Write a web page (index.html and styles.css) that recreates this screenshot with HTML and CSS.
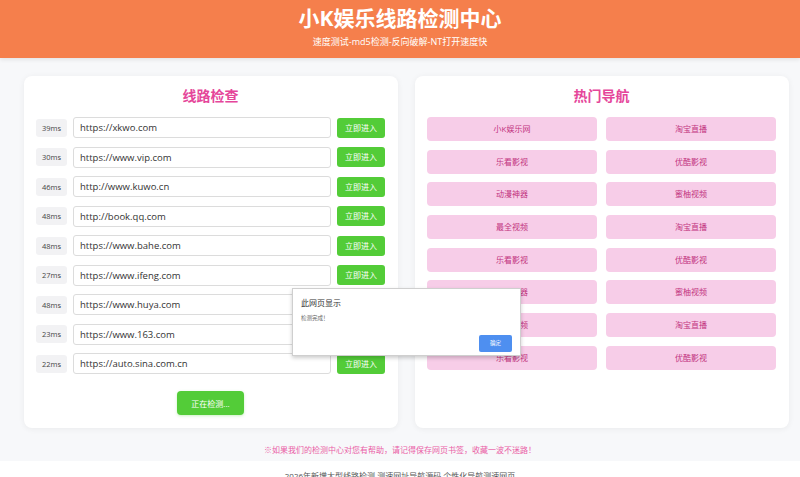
FILE: index.html
```html
<!DOCTYPE html>
<html lang="zh-CN">

<head>
	<meta charset="UTF-8">
	<title>小K娱乐线路检测中心</title>
	<link rel="stylesheet" href="styles.css">
</head>

<body>
	<header class="top">
		<h1>小K娱乐线路检测中心</h1>
		<p>速度测试-md5检测-反向破解-NT打开速度快</p>
	</header>

	<main class="main">
		<section class="card">
			<h2>线路检查</h2>
			<div class="lines">
				<div class="line"><span class="ms">39ms</span><input class="url" value="https://xkwo.com"><a class="go">立即进入</a></div>
				<div class="line"><span class="ms">30ms</span><input class="url" value="https://www.vip.com"><a class="go">立即进入</a></div>
				<div class="line"><span class="ms">46ms</span><input class="url" value="http://www.kuwo.cn"><a class="go">立即进入</a></div>
				<div class="line"><span class="ms">48ms</span><input class="url" value="http://book.qq.com"><a class="go">立即进入</a></div>
				<div class="line"><span class="ms">48ms</span><input class="url" value="https://www.bahe.com"><a class="go">立即进入</a></div>
				<div class="line"><span class="ms">27ms</span><input class="url" value="https://www.ifeng.com"><a class="go">立即进入</a></div>
				<div class="line"><span class="ms">48ms</span><input class="url" value="https://www.huya.com"><a class="go">立即进入</a></div>
				<div class="line"><span class="ms">23ms</span><input class="url" value="https://www.163.com"><a class="go">立即进入</a></div>
				<div class="line"><span class="ms">22ms</span><input class="url" value="https://auto.sina.com.cn"><a class="go">立即进入</a></div>
			</div>
			<div class="check-wrap"><button class="check">正在检测...</button></div>
		</section>

		<section class="card">
			<h2>热门导航</h2>
			<div class="nav">
				<a>小K娱乐网</a>
				<a>淘宝直播</a>
				<a>乐看影视</a>
				<a>优酷影视</a>
				<a>动漫神器</a>
				<a>蜜柚视频</a>
				<a>最全视频</a>
				<a>淘宝直播</a>
				<a>乐看影视</a>
				<a>优酷影视</a>
				<a>动漫神器</a>
				<a>蜜柚视频</a>
				<a>最全视频</a>
				<a>淘宝直播</a>
				<a>乐看影视</a>
				<a>优酷影视</a>
			</div>
		</section>
	</main>

	<p class="tip">※如果我们的检测中心对您有帮助，请记得保存网页书签，收藏一波不迷路！</p>

	<footer class="foot">2026年新增大型线路检测 测速网址导航源码 个性化导航测速网页</footer>

	<!-- 模拟浏览器弹窗 -->
	<div class="alert">
		<div class="alert-title">此网页显示</div>
		<div class="alert-msg">检测完成！</div>
		<div class="alert-btns"><button class="ok">确定</button></div>
	</div>
</body>

</html>
```

FILE: styles.css
```css
* {
	margin: 0;
	padding: 0;
	box-sizing: border-box;
}

body {
	background: #f7f8fa;
	font-family: "Open Sans", "Noto Sans CJK SC", sans-serif;
	color: #333;
	overflow: hidden;
	height: 477px;
}

.top {
	background: #f57f4c;
	color: #fff;
	text-align: center;
	height: 58px;
	padding-top: 5px;
	box-shadow: 0 2px 4px rgba(0, 0, 0, 0.08);
}

.top h1 {
	font-size: 21px;
	line-height: 27px;
	font-weight: bold;
}

.top p {
	font-size: 9px;
	line-height: 14px;
	margin-top: 3px;
}

.main {
	display: grid;
	grid-template-columns: 374px 374px;
	gap: 17px;
	padding: 18px 11px 0 24px;
}

.card {
	background: #fff;
	border-radius: 8px;
	box-shadow: 0 1px 6px rgba(0, 0, 0, 0.06);
	padding: 11px 13px 13px 12px;
	height: 352px;
	display: flex;
	flex-direction: column;
}

.card h2 {
	color: #e5469a;
	font-size: 14px;
	line-height: 18px;
	text-align: center;
	font-weight: bold;
	margin-bottom: 12px;
}

.lines {
	display: flex;
	flex-direction: column;
	gap: 8.5px;
}

.line {
	display: flex;
	align-items: center;
	height: 21px;
}

.ms {
	width: 31px;
	height: 18px;
	line-height: 18px;
	background: #f2f2f4;
	border-radius: 3px;
	font-size: 7.5px;
	text-align: center;
	color: #444;
	margin-right: 6px;
}

.url {
	flex: 1;
	height: 21px;
	border: 1px solid #dcdcdc;
	border-radius: 3px;
	padding: 0 6px;
	font-family: "Open Sans", "Noto Sans CJK SC", sans-serif;
	font-size: 9.5px;
	color: #333;
	margin-right: 6px;
	min-width: 0;
}

.go {
	width: 48px;
	height: 20px;
	line-height: 20px;
	background: #53cc38;
	border-radius: 3px;
	color: #fff;
	font-size: 8px;
	text-align: center;
}

.check-wrap {
	margin-top: auto;
	text-align: center;
}

.check {
	width: 67px;
	height: 24px;
	border: none;
	border-radius: 4px;
	background: #53cc38;
	color: #fff;
	font-family: "Open Sans", "Noto Sans CJK SC", sans-serif;
	font-size: 8px;
	box-shadow: 0 1px 3px rgba(83, 204, 56, 0.3);
}

.nav {
	display: grid;
	grid-template-columns: 1fr 1fr;
	column-gap: 9px;
	row-gap: 8.7px;
}

.nav a {
	display: block;
	height: 24px;
	line-height: 24px;
	background: #f7cde8;
	border-radius: 4px;
	color: #c2347f;
	font-size: 8px;
	text-align: center;
}

.tip {
	text-align: center;
	color: #ea5da6;
	font-size: 8px;
	line-height: 12px;
	margin-top: 16px;
	height: 17px;
}

.foot {
	background: #fff;
	height: 16px;
	overflow: hidden;
	text-align: center;
	font-size: 8px;
	line-height: 12px;
	color: #555;
	padding-top: 9px;
}

/* 弹窗 */
.alert {
	position: absolute;
	left: 292px;
	top: 288px;
	width: 229px;
	height: 68px;
	background: #fff;
	border: 1px solid #cfcfcf;
	box-shadow: 0 2px 4px rgba(0, 0, 0, 0.2);
	padding: 8px 8px 0 8px;
}

.alert-title {
	font-size: 8px;
	line-height: 11px;
	color: #333;
}

.alert-msg {
	font-size: 5.5px;
	line-height: 8px;
	color: #666;
	margin-top: 6px;
}

.alert-btns {
	text-align: right;
	margin-top: 6px;
}

.ok {
	width: 33px;
	height: 17px;
	border: none;
	border-radius: 2px;
	background: #4e8ff0;
	color: #fff;
	font-family: "Open Sans", "Noto Sans CJK SC", sans-serif;
	font-size: 5.5px;
}
```
